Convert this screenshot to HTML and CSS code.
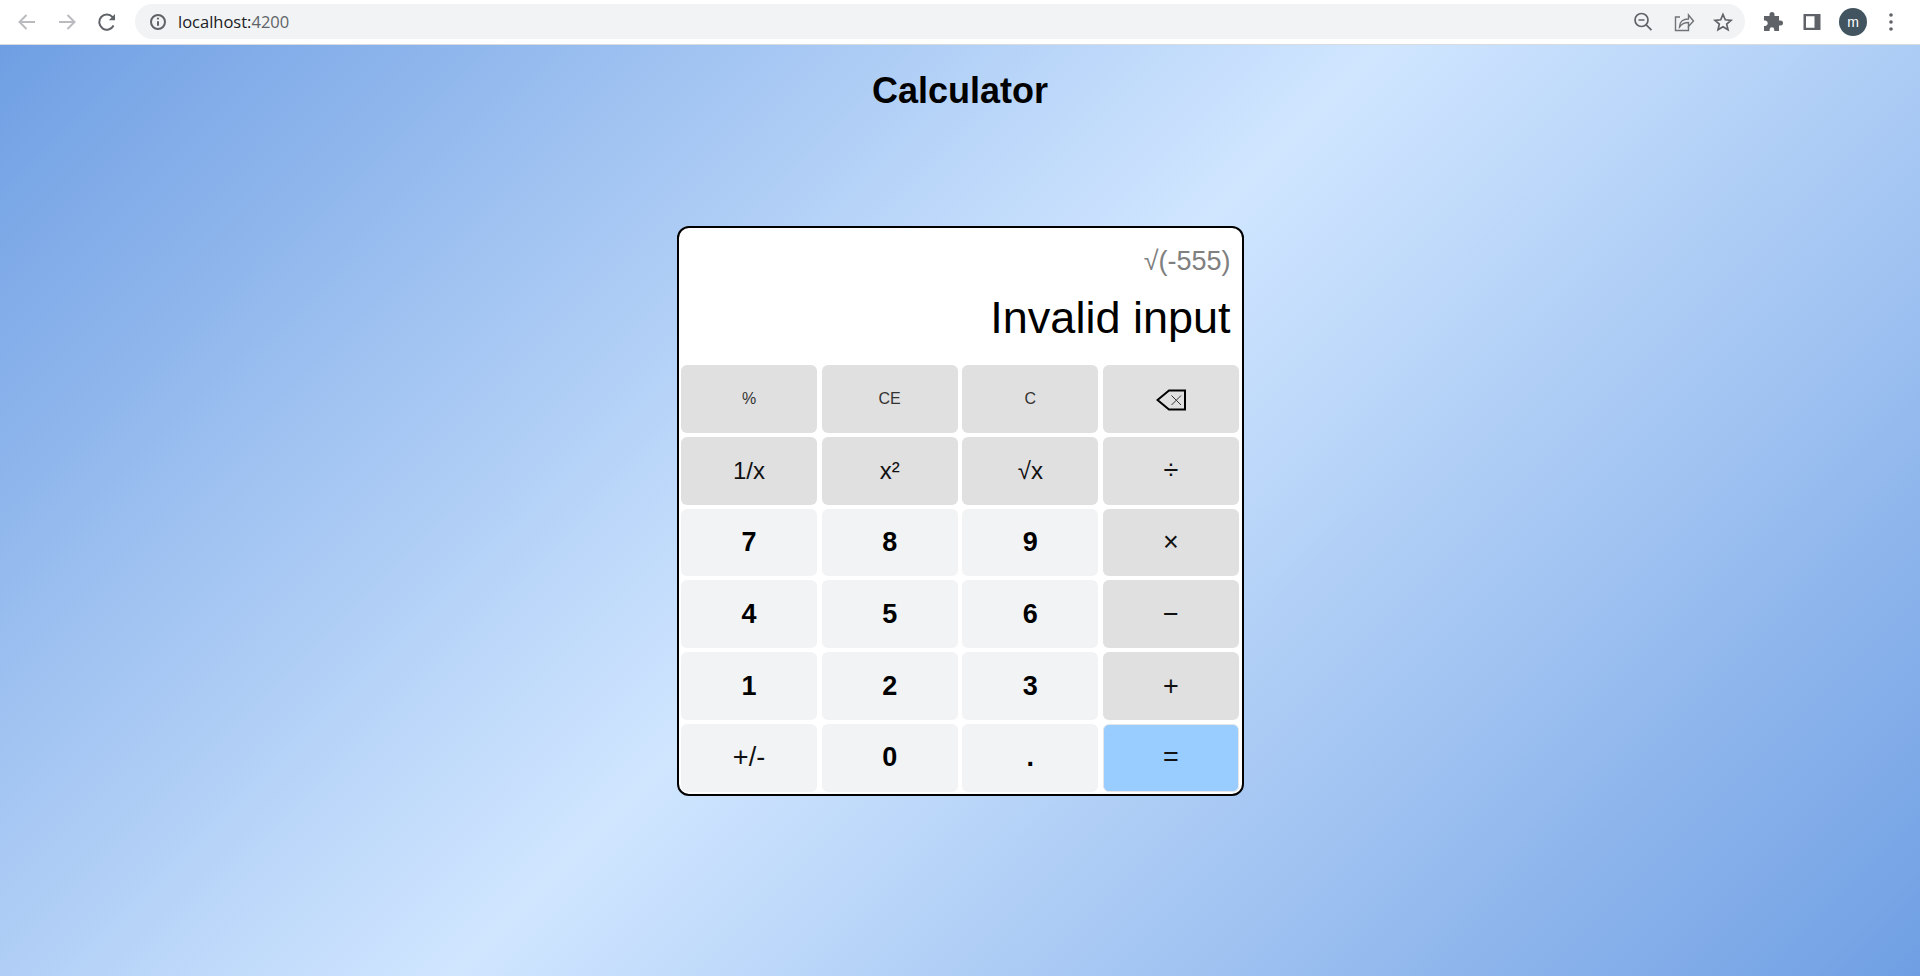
FILE: index.html
```html
<!DOCTYPE html>
<html lang="en">
<head>
<meta charset="utf-8">
<title>Calculator</title>
<link rel="stylesheet" href="styles.css">
</head>
<body>
<header class="chrome">
  <div class="nav">
    <svg class="ic" viewBox="0 0 24 24"><path class="s-dim" d="M20 12H5M11.500 5L4.500 12l7 7"/></svg>
    <svg class="ic" viewBox="0 0 24 24"><path class="s-dim" d="M4 12h15M12.500 5l7 7-7 7"/></svg>
    <svg class="ic" viewBox="0 0 24 24"><path class="s-dark" d="M18.600 15.500A7.600 7.600 0 1 1 17.600 7.100L19.500 9"/><path class="f-dark" d="M20 4v6.200h-6.200z"/></svg>
  </div>
  <div class="omni">
    <svg class="ic-sm" viewBox="0 0 18 18"><circle class="s-dark" cx="9" cy="9" r="7"/><path class="s-dark" d="M9 8.200v4.600"/><circle class="f-dark" cx="9" cy="5.600" r="1.100"/></svg>
    <span class="url">localhost:<span class="port">4200</span></span>
    <div class="omni-actions">
      <svg class="ic" viewBox="0 0 24 24"><circle class="s-mid" cx="10.500" cy="10" r="6.500"/><path class="s-mid" d="M7.500 10h6M15.200 14.800l5.300 5.300"/></svg>
      <svg class="ic" viewBox="0 0 24 24"><path class="s-thin" d="M9 7H4.500v13.500h13V16"/><path class="s-thin" d="M8.500 17c0-5 3.500-8 9-8V5l5 6-5 5.500v-4c-4 0-7 1.500-9 4.500z"/></svg>
      <svg class="ic" viewBox="0 0 24 24"><path class="s-mid" d="M12 4.500l2.300 5.300 5.700.5-4.300 3.800 1.300 5.600-5-3-5 3 1.300-5.600L4 10.300l5.700-.5z"/></svg>
    </div>
  </div>
  <div class="tools">
    <svg class="ic" viewBox="0 0 24 24"><path class="f-dark" d="M9.500 4.500a2.500 2.500 0 0 1 5 0V6H19v4.500h1.500a2.500 2.500 0 0 1 0 5H19V21h-4.800v-1.500a2.300 2.300 0 0 0-4.600 0V21H4v-5h1.500a2.800 2.800 0 0 0 0-5.500H4V6h5.500z"/></svg>
    <svg class="ic" viewBox="0 0 24 24"><path class="f-dark" fill-rule="evenodd" d="M3.500 4h17v16h-17zM6 6.200v11.600h8.500V6.200z"/></svg>
    <div class="avatar">m</div>
    <svg class="ic" viewBox="0 0 24 24"><circle class="f-dark" cx="12" cy="5" r="1.800"/><circle class="f-dark" cx="12" cy="12" r="1.800"/><circle class="f-dark" cx="12" cy="19" r="1.800"/></svg>
  </div>
</header>
<main class="page">
  <h1 class="title">Calculator</h1>
  <section class="calc">
    <div class="display">
      <div class="expr">√(-555)</div>
      <div class="result">Invalid input</div>
    </div>
    <div class="keys">
      <button class="key op small">%</button>
      <button class="key op small">CE</button>
      <button class="key op small">C</button>
      <button class="key op small"><svg class="back" viewBox="0 0 30 22"><path d="M29 1.500H13L1.500 11 13 20.500H29z"/><path class="thin" d="M15.500 6.500l9.500 9.500M25 6.500l-9.500 9.500"/></svg></button>
      <button class="key op">1/x</button>
      <button class="key op">x²</button>
      <button class="key op">√x</button>
      <button class="key op large">÷</button>
      <button class="key num strong">7</button>
      <button class="key num strong">8</button>
      <button class="key num strong">9</button>
      <button class="key op large">×</button>
      <button class="key num strong">4</button>
      <button class="key num strong">5</button>
      <button class="key num strong">6</button>
      <button class="key op large">−</button>
      <button class="key num strong">1</button>
      <button class="key num strong">2</button>
      <button class="key num strong">3</button>
      <button class="key op large">+</button>
      <button class="key num large">+/-</button>
      <button class="key num strong">0</button>
      <button class="key num strong">.</button>
      <button class="key equals large">=</button>
    </div>
  </section>
</main>
</body>
</html>
```
FILE: styles.css
```css
* { box-sizing: border-box; }
html, body { margin: 0; height: 100%; }
body {
  display: flex;
  flex-direction: column;
  font-family: "Liberation Sans", Arial, sans-serif;
  overflow: hidden;
}
.chrome {
  height: 45px;
  flex: none;
  display: flex;
  align-items: center;
  background: #fff;
  border-bottom: 1px solid #d9dbde;
  padding-bottom: 1px;
}
.nav {
  display: flex;
  align-items: center;
  gap: 16px;
  padding-left: 15px;
  width: 135px;
  flex: none;
}
.ic { width: 24px; height: 24px; flex: none; display: block; }
.ic-sm { width: 18px; height: 18px; flex: none; display: block; }
.s-dim, .s-dark, .s-mid, .s-thin { fill: none; stroke-width: 2; }
.s-dim { stroke: #b9bbbe; }
.s-dark { stroke: #5f6368; }
.s-mid { stroke: #5f6368; stroke-width: 1.700; }
.s-thin { stroke: #6f7377; stroke-width: 1.400; }
.f-dark { fill: #5f6368; }
.omni {
  width: 1610px;
  height: 35px;
  flex: none;
  display: flex;
  align-items: center;
  gap: 11px;
  background: #f1f3f4;
  border-radius: 18px;
  padding: 0 10px 0 14px;
}
.url { font: 16.500px "Open Sans", "Liberation Sans", sans-serif; color: #202124; flex: 1; }
.port { color: #5f6368; }
.omni-actions { display: flex; align-items: center; gap: 16px; }
.tools {
  display: flex;
  align-items: center;
  gap: 16px;
  padding-left: 15px;
}
.avatar {
  width: 28px;
  height: 28px;
  margin-left: -1px;
  margin-right: -4px;
  border-radius: 50%;
  background: #41545f;
  color: #fff;
  font: 14px "Liberation Sans", Arial, sans-serif;
  display: flex;
  align-items: center;
  justify-content: center;
  flex: none;
}
.page {
  flex: 1;
  display: flex;
  flex-direction: column;
  align-items: center;
  background: linear-gradient(135deg, #6f9fe3 0%, #d0e6ff 48.500%, #6f9fe3 100%);
}
.title {
  margin: 25px 0 0;
  font-size: 36px;
  line-height: 42px;
  font-weight: 700;
  color: #000;
}
.calc {
  margin-top: 114px;
  width: 567px;
  height: 570px;
  background: #fff;
  border: 2px solid #000;
  border-radius: 12px;
  padding: 0 2.500px;
  display: flex;
  flex-direction: column;
}
.display {
  height: 137px;
  flex: none;
  padding: 17px 8.500px 0 0;
  text-align: right;
}
.expr { font-size: 27px; line-height: 33px; color: #808080; }
.result { font-size: 45px; line-height: 52px; margin-top: 14px; color: #000; }
.keys {
  display: grid;
  grid-template-columns: repeat(4, 1fr);
  grid-auto-rows: 67.800px;
  column-gap: 4.670px;
  row-gap: 4px;
}
.key {
  border: 0;
  border-radius: 6px;
  padding: 0;
  font: 24px "Liberation Sans", Arial, sans-serif;
  color: #111;
  display: flex;
  align-items: center;
  justify-content: center;
}
.op { background: #e0e0e0; }
.num { background: #f1f3f5; }
.small { font-size: 16px; color: #333; }
.large { font-size: 27px; }
.strong { font-weight: 700; font-size: 27px; color: #000; }
.equals { background: #99ccff; border: 1px solid #e4e6ea; }
.back { width: 30px; height: 22px; display: block; margin-top: 2px; }
.back path { fill: none; stroke: #000; stroke-width: 2; }
.back path.thin { stroke: #333; stroke-width: 1; }
```
